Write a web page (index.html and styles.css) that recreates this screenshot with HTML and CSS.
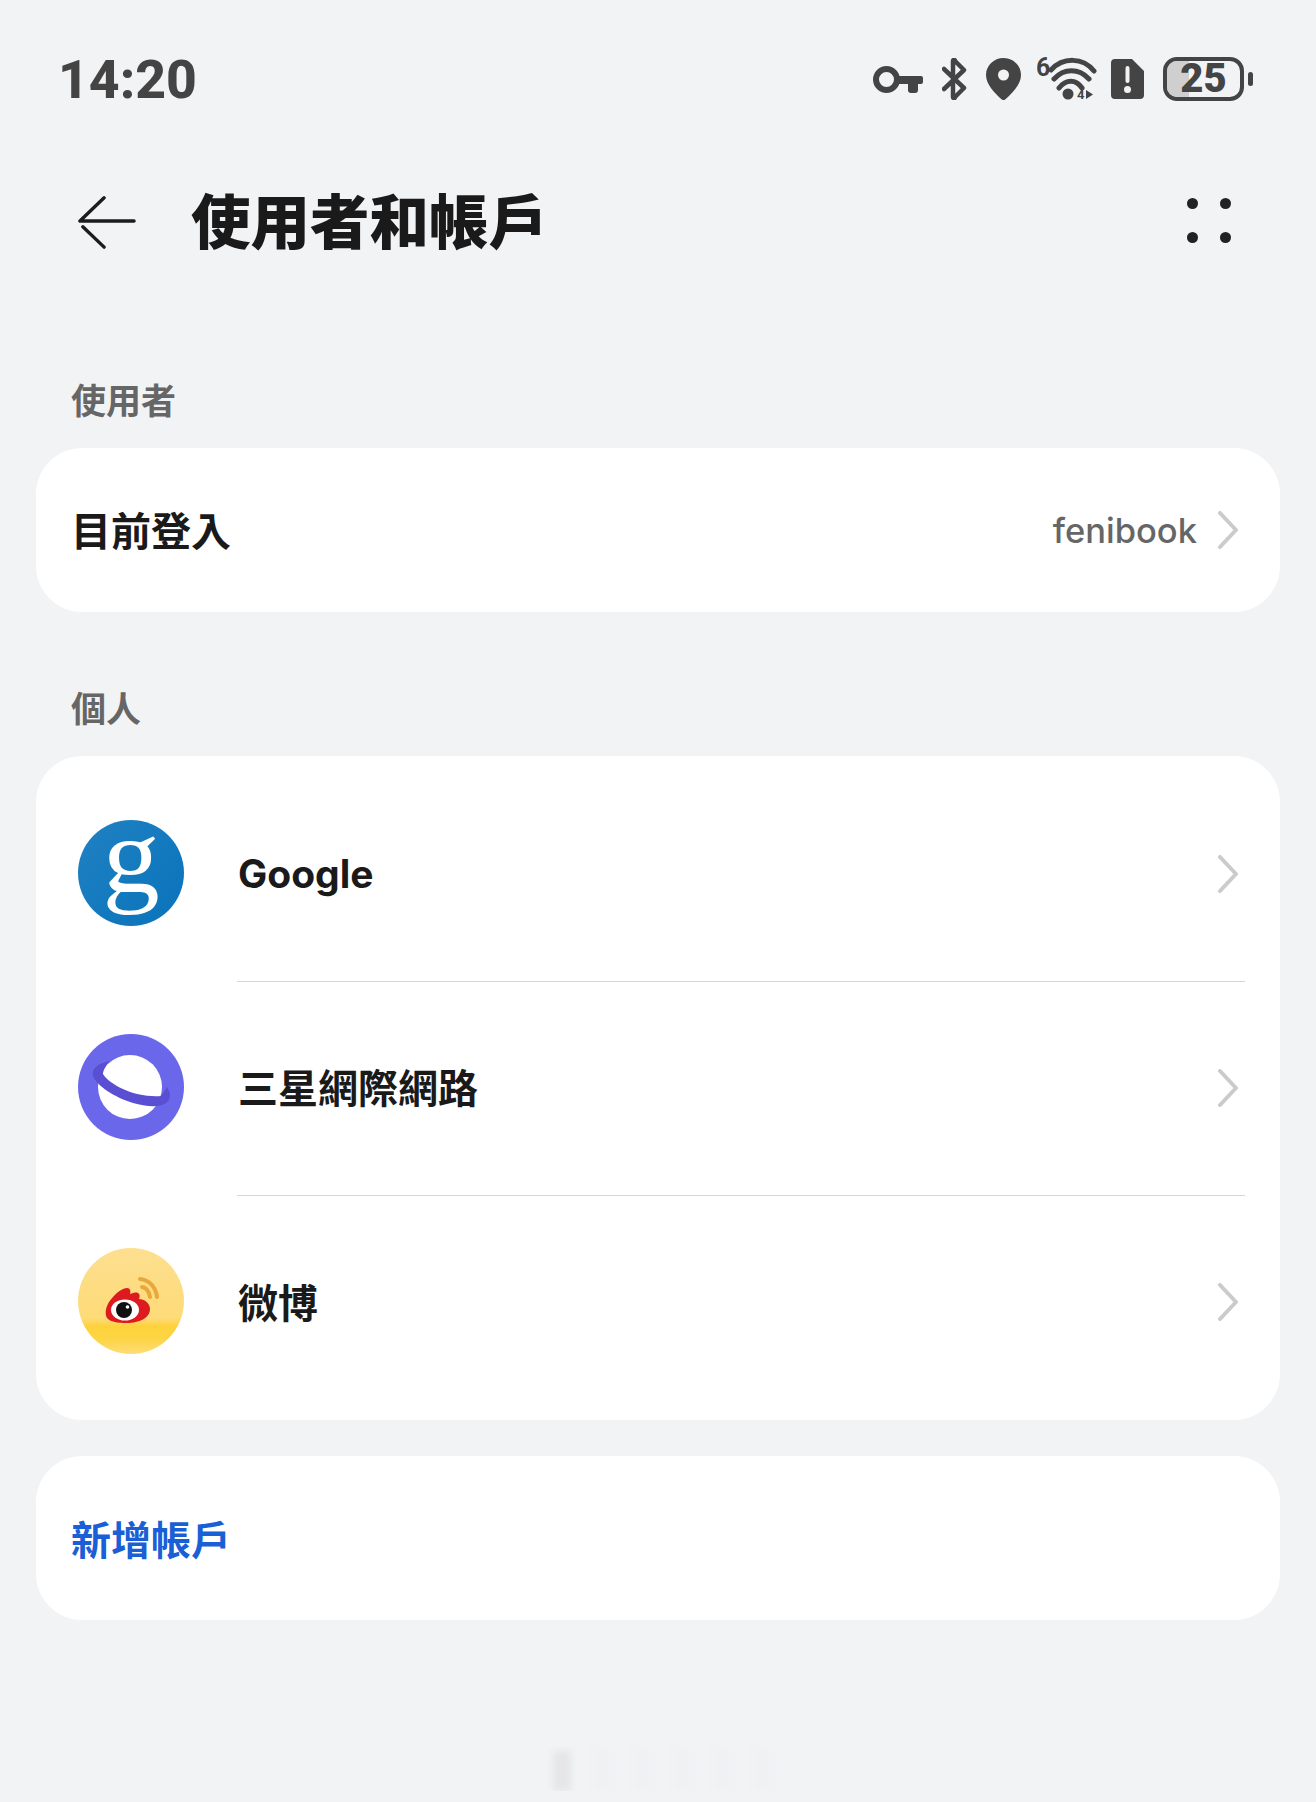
FILE: index.html
```html
<!DOCTYPE html>
<html lang="zh-Hant">

<head>
    <meta charset="UTF-8">
    <meta name="viewport" content="width=device-width, initial-scale=1.0">
    <title>使用者和帳戶</title>
    <link rel="stylesheet" href="styles.css">
</head>

<body>
    <div class="status-bar">
        <span class="clock">14:20</span>
        <div class="status-icons">
            <svg class="st-key" viewBox="0 0 50 27">
                <circle cx="13.5" cy="13.5" r="10.5" fill="none" stroke="#444" stroke-width="6"/>
                <path d="M22 10h26a2 2 0 0 1 2 2v4a2 2 0 0 1-2 2h-3v6a3 3 0 0 1-3 3h-4a3 3 0 0 1-3-3v-6H22z" fill="#444"/>
            </svg>
            <svg class="st-bt" viewBox="0 0 25 42">
                <path d="M2 11l20 19-9 9a1 1 0 0 1-2 0V3a1 1 0 0 1 2 0l9 9L2 31" fill="none" stroke="#444" stroke-width="4.5" stroke-linecap="round" stroke-linejoin="round"/>
            </svg>
            <svg class="st-pin" viewBox="0 0 35 42">
                <path fill-rule="evenodd" d="M17.5 0C7.8 0 0 7.6 0 17c0 9.500 9 18.500 15.500 24.200a3 3 0 0 0 4 0C26 35.500 35 26.500 35 17 35 7.600 27.200 0 17.500 0zm0 11.500a5.500 5.500 0 1 1 0 11 5.500 5.500 0 0 1 0-11z" fill="#444"/>
            </svg>
            <svg class="st-wifi" viewBox="0 -10 60 62">
                <text x="-1" y="18" class="st-wifi-num">6</text>
                <path d="M14 12C26 -1 46 -1 57 13M17 21C27 10 42 10 52 21M22 30C29 21 39 21 45 30" fill="none" stroke="#444" stroke-width="5" stroke-linecap="round"/>
                <circle cx="31" cy="36" r="5.500" fill="#444"/>
                <text x="40" y="41" class="st-wifi-sub">4</text>
                <path d="M49 32v9l7-4.500z" fill="#444"/>
            </svg>
            <svg class="st-sim" viewBox="0 0 33 40">
                <path fill-rule="evenodd" d="M4 0h17l12 12v24a4 4 0 0 1-4 4H4a4 4 0 0 1-4-4V4a4 4 0 0 1 4-4zm10.500 9v13a2 2 0 0 0 4 0V9a2 2 0 0 0-4 0zm2 18a3.500 3.500 0 1 0 0 7 3.500 3.500 0 0 0 0-7z" fill="#444"/>
            </svg>
            <div class="battery">
                <div class="battery-body">
                    <div class="battery-fill"></div>
                    <span class="battery-num">25</span>
                </div>
                <div class="battery-nub"></div>
            </div>
        </div>
    </div>

    <div class="top-bar">
        <svg class="back-icon" viewBox="0 0 60 54">
            <path d="M27 2L2 26h56M5 32l22 21" fill="none" stroke="#1c1c1c" stroke-width="3.500" stroke-linecap="round" stroke-linejoin="round"/>
        </svg>
        <h1 class="page-title">使用者和帳戶</h1>
        <div class="more-dots"><i></i><i></i><i></i><i></i></div>
    </div>

    <h2 class="section-label first">使用者</h2>
    <div class="card single">
        <span class="row-name">目前登入</span>
        <span class="row-value">fenibook</span>
        <svg class="chevron" viewBox="0 0 22 38"><path d="M3 2l16 17L3 36" fill="none" stroke="#cbcbcb" stroke-width="4" stroke-linecap="round" stroke-linejoin="round"/></svg>
    </div>

    <h2 class="section-label">個人</h2>
    <div class="card list">
        <div class="account-row">
            <div class="google-badge"><span class="google-g">g</span></div>
            <div class="account-main">
                <span class="row-name latin">Google</span>
                <svg class="chevron" viewBox="0 0 22 38"><path d="M3 2l16 17L3 36" fill="none" stroke="#cbcbcb" stroke-width="4" stroke-linecap="round" stroke-linejoin="round"/></svg>
            </div>
        </div>
        <div class="account-row">
            <svg class="app-icon" viewBox="0 0 106 106">
                <circle cx="53" cy="53" r="53" fill="#6a67ea"/>
                <circle cx="52" cy="53" r="32" fill="#fff"/>
                <path d="M32 27C20 29 13 35 15 42C19 52 36 63 55 69C72 74 90 74 92 63C92.500 60 91 56 89 53L83 62C70 63 55 60 45 55C36 51 28 45 25 40C25 37 28 31 32 27z" fill="#5a4fd3"/>
            </svg>
            <div class="account-main">
                <span class="row-name">三星網際網路</span>
                <svg class="chevron" viewBox="0 0 22 38"><path d="M3 2l16 17L3 36" fill="none" stroke="#cbcbcb" stroke-width="4" stroke-linecap="round" stroke-linejoin="round"/></svg>
            </div>
        </div>
        <div class="account-row">
            <svg class="app-icon" viewBox="0 0 106 106">
                <defs>
                    <linearGradient id="weiboBg" x1="0" y1="0" x2="0" y2="1">
                        <stop offset="0" stop-color="#fddf90"/>
                        <stop offset="0.66" stop-color="#fddb78"/>
                        <stop offset="0.74" stop-color="#fdd23c"/>
                        <stop offset="0.86" stop-color="#fdd545"/>
                        <stop offset="1" stop-color="#fedc78"/>
                    </linearGradient>
                </defs>
                <circle cx="53" cy="53" r="53" fill="url(#weiboBg)"/>
                <path d="M62 31c9 1 16 8 17 18M64 39c4 .5 7 4 8 10" fill="none" stroke="#e9a73c" stroke-width="4" stroke-linecap="round"/>
                <path d="M29 70c-3-5-1-14 6-21 5-6 11-9 14-9 3 0 4 3 3 6 3-1 6-2 8-1 2 1 2 4 1 6 5 0 11 4 11 10 0 9-11 14-23 14-9 0-17-1-20-5z" fill="#dd1a20"/>
                <ellipse cx="47" cy="62" rx="14" ry="10.500" fill="#fff"/>
                <circle cx="46" cy="62" r="8" fill="#111"/>
                <circle cx="49.500" cy="59" r="1.800" fill="#fff"/>
            </svg>
            <div class="account-main">
                <span class="row-name">微博</span>
                <svg class="chevron" viewBox="0 0 22 38"><path d="M3 2l16 17L3 36" fill="none" stroke="#cbcbcb" stroke-width="4" stroke-linecap="round" stroke-linejoin="round"/></svg>
            </div>
        </div>
    </div>

    <div class="card single add-card">
        <span class="add-link">新增帳戶</span>
    </div>

    <div class="smudge"><i></i><i></i><i></i><i></i><i></i><i></i></div>
</body>

</html>
```

FILE: styles.css
```css
body {
    margin: 0;
    background-color: #f2f3f5;
    font-family: "Noto Sans CJK TC", "Noto Sans", sans-serif;
    color: #1a1a1a;
}

.status-bar {
    display: flex;
    justify-content: space-between;
    align-items: center;
    height: 44px;
    padding: 57px 63px 0 58px;
}

.clock {
    font-family: "Roboto", sans-serif;
    font-size: 53.5px;
    font-weight: 800;
    color: #444;
    line-height: 44px;
    margin-top: 2px;
}

.status-icons {
    display: flex;
    align-items: center;
}

.st-key { width: 50px; height: 27px; margin-top: 1px; }
.st-bt { width: 25px; height: 42px; margin-left: 19px; }
.st-pin { width: 35px; height: 42px; margin-left: 19px; }
.st-wifi { width: 60px; height: 62px; margin-left: 16px; }
.st-sim { width: 33px; height: 40px; margin-left: 14px; }

.st-wifi-num {
    font-family: "Roboto", sans-serif;
    font-size: 25px;
    font-weight: 700;
    fill: #444;
}

.st-wifi-sub {
    font-family: "Roboto", sans-serif;
    font-size: 13px;
    font-weight: 700;
    fill: #444;
}

.battery {
    display: flex;
    align-items: center;
    margin-left: 19px;
}

.battery-body {
    position: relative;
    display: flex;
    justify-content: center;
    align-items: center;
    width: 81px;
    height: 44px;
    box-sizing: border-box;
    border: 4px solid #444;
    border-radius: 14px;
}

.battery-fill {
    position: absolute;
    left: 0;
    top: 0;
    bottom: 0;
    width: 30%;
    border-radius: 10px 0 0 10px;
    background-color: #cfcfcf;
}

.battery-num {
    position: relative;
    font-family: "Roboto", sans-serif;
    font-size: 40px;
    font-weight: 900;
    color: #444;
    line-height: 1;
}

.battery-nub {
    width: 5px;
    height: 14px;
    margin-left: 4px;
    border-radius: 3px;
    background-color: #444;
}

.top-bar {
    display: flex;
    align-items: center;
    height: 84px;
    margin-top: 77px;
    padding: 0 85px 0 78px;
}

.back-icon {
    width: 58px;
    height: 54px;
    flex: none;
    margin-top: 4px;
}

.page-title {
    margin: -4px 0 0 55px;
    flex: 1;
    font-size: 59.5px;
    font-weight: 900;
    line-height: 84px;
}

.more-dots {
    display: grid;
    grid-template-columns: 11px 11px;
    gap: 23px 22px;
}

.more-dots i {
    width: 11px;
    height: 11px;
    border-radius: 50%;
    background-color: #222;
}

.section-label {
    margin: 70px 0 24px;
    padding: 0 0 0 71px;
    font-size: 35px;
    font-weight: 700;
    line-height: 50px;
    color: #666;
    height: 50px;
}

.section-label.first {
    margin-top: 112px;
}

.card {
    margin: 0 36px;
    background-color: #fff;
    border-radius: 46px;
}

.card.single {
    display: flex;
    align-items: center;
    height: 164px;
    padding: 0 41px 0 35px;
}

.card.list {
    padding: 10px 0 12px;
}

.row-name {
    flex: 1;
    font-size: 40px;
    font-weight: 700;
    line-height: 56px;
    color: #1a1a1a;
    margin-bottom: 3px;
}

.row-name.latin {
    font-family: "Inter", sans-serif;
    font-size: 39px;
    margin-bottom: 0;
}

.row-value {
    font-family: "Inter", sans-serif;
    font-size: 34.5px;
    font-weight: 500;
    color: #666;
    margin-right: 20px;
}

.chevron {
    width: 22px;
    height: 38px;
    flex: none;
}

.account-row {
    display: flex;
    align-items: stretch;
    height: 214px;
    padding-left: 42px;
}

.app-icon {
    width: 106px;
    height: 106px;
    flex: none;
    align-self: center;
}

.google-badge {
    display: flex;
    justify-content: center;
    align-items: center;
    width: 106px;
    height: 106px;
    flex: none;
    align-self: center;
    border-radius: 50%;
    background: linear-gradient(135deg, #1f81c2, #0a73bb);
}

.google-g {
    font-family: "Liberation Serif", serif;
    font-size: 108px;
    line-height: 1;
    color: #fff;
    margin-top: -34px;
    transform: scaleX(1.06);
}

.account-main {
    display: flex;
    align-items: center;
    flex: 1;
    margin: 0 35px -2px 53px;
    padding: 0 6px 0 1px;
    border-bottom: 1px solid #d6d6d6;
}

.account-row:last-child .account-main {
    border-bottom: none;
}

.add-card {
    margin-top: 36px;
}

.add-link {
    font-size: 40px;
    font-weight: 700;
    color: #1a5fd6;
}

/* faint watermark trace at the bottom edge */
.smudge {
    display: flex;
    gap: 22px;
    height: 40px;
    margin: 131px 0 0 553px;
    filter: blur(3px);
}

.smudge i {
    width: 18px;
    background-color: #f0f1f2;
}

.smudge i:first-child {
    background-color: #e6e6e8;
}
```
